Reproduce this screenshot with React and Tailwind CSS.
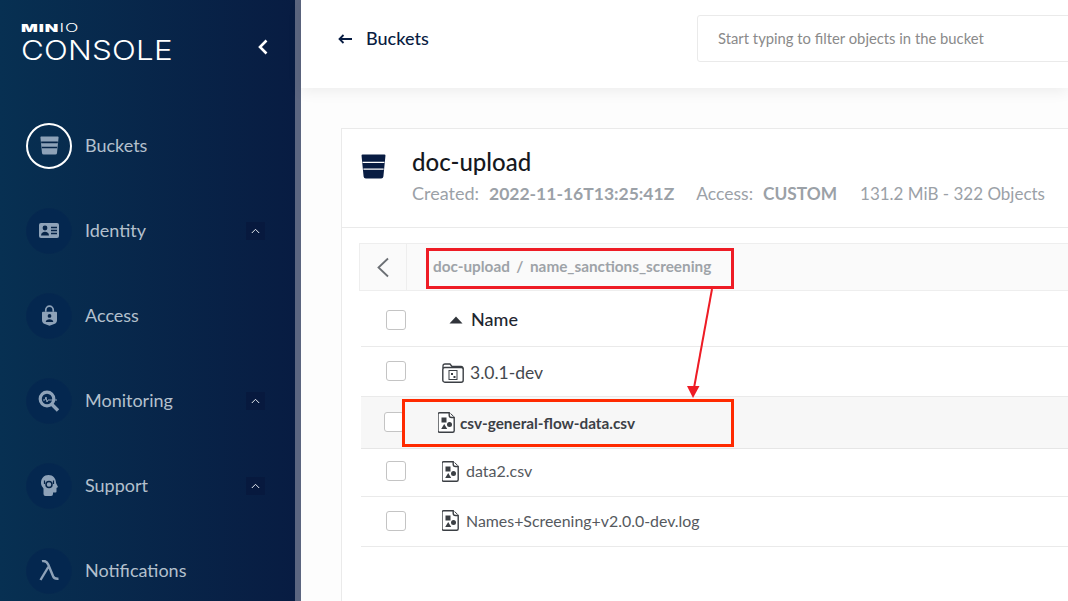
import React from "react";

const Chevron = () => (
  <span className="ml-auto mr-[30px] flex h-[18px] w-[19px] items-center justify-center bg-[#07193e]">
    <svg width="9" height="6" viewBox="0 0 9 6" fill="none" stroke="#e6eaf0" strokeWidth="1"><path d="M.8 5 4.500 1.300 8.200 5" /></svg>
  </span>
);

const BucketGlyph = ({ fill = "#8ea2b8", size = 20, line = "#062448", lw = 2 }) => (
  <svg width={size} height={size} viewBox="0 0 24 24">
    <path d="M.5 1.500Q.5 .5 1.500 .5h21q1 0 1 1L21.500 21.500q-.2 2-2.200 2H4.700q-2 0-2.200-2Z" fill={fill} />
    <path d="M1.500 8h21M2.300 14.500h19.400" stroke={line} strokeWidth={lw} />
  </svg>
);

const IdentityIcon = () => (
  <svg width="20" height="15" viewBox="0 0 20 15"><rect width="20" height="15" rx="2" fill="#8ea2b8" /><circle cx="6" cy="5" r="2.400" fill="#062448" /><path d="M2 12.500c0-5 8-5 8 0Z" fill="#062448" /><path d="M12 4.500h6M12 7.500h6M12 10.500h6" stroke="#062448" strokeWidth="1.300" /></svg>
);
const AccessIcon = () => (
  <svg width="15" height="21" viewBox="0 0 16 22"><path d="M4 7V5a4 4 0 0 1 8 0v2" fill="none" stroke="#8ea2b8" strokeWidth="1.800" /><path d="M1 7h14q1 0 1 1v8q0 3-3 4l-5 2-5-2q-3-1-3-4V8q0-1 1-1Z" fill="#8ea2b8" /><circle cx="8" cy="11.500" r="2" fill="#062448" /><path d="M4 18c0-4 8-4 8 0Z" fill="#062448" /></svg>
);
const MonitorIcon = () => (
  <svg width="22" height="22" viewBox="0 0 22 22"><circle cx="9" cy="9" r="6.800" fill="none" stroke="#8ea2b8" strokeWidth="3.200" /><path d="m13.500 14 6.500 6.500" stroke="#8ea2b8" strokeWidth="3.400" /><path d="M5 10h2l1-3 1 5 1-2h9" fill="none" stroke="#8ea2b8" strokeWidth="1" /></svg>
);
const SupportIcon = () => (
  <svg width="17" height="21" viewBox="0 0 17 21"><path d="M7.500 0C3 0 0 3.500 0 8c0 2.500 1.500 4 2.500 5.500V19q0 2 2 2H10q2 0 2-2v-1.500h2.500q1 0 1-1V13l1.500-1-2-4c0-4.500-3-8-7.500-8Z" fill="#8ea2b8" /><circle cx="8" cy="9.500" r="3" fill="none" stroke="#062448" strokeWidth="1.500" /><path d="M3.500 9V5.500M12.500 9V5.500" stroke="#062448" strokeWidth="1.200" /></svg>
);
const LambdaIcon = () => (
  <svg width="21" height="21" viewBox="0 0 21 21"><path d="M3 1.200c3.500-.8 5 .3 6.200 3.300l5 12c.7 2 2 2.500 5.300 2.200M9.300 7 1.500 20" fill="none" stroke="#8ea2b8" strokeWidth="2.400" /></svg>
);

const NavItem = ({ label, icon, active, chevron }) => (
  <div className="flex h-[85px] items-center pl-[26px]">
    <span className={`flex h-[46px] w-[46px] items-center justify-center rounded-full ${active ? "border-2 border-white" : "border border-[#06284f] bg-[#04274f]"}`}>{icon}</span>
    <span className="ml-[13px] text-[18px] text-[#b4c0cd]">{label}</span>
    {chevron && <Chevron />}
  </div>
);

const FileIcon = () => (
  <svg width="17" height="21" viewBox="0 0 17 21" className="block shrink-0">
    <path d="M1.500 .8h9.700v2.500q0 2.200 2.300 2.200h2.700V18.700q0 1.500-1.500 1.500h-13.200q-1.500 0-1.500-1.500V2.300q0-1.500 1.500-1.500Z" fill="#fff" stroke="#3b3f44" strokeWidth="1.400" />
    <path d="M12.500 1.500 15.700 4.500" stroke="#3b3f44" strokeWidth="1" />
    <rect x="3.500" y="5.500" width="5" height="5" fill="#3b3f44" />
    <circle cx="11.500" cy="12.500" r="2.500" fill="#3b3f44" />
    <path d="m6.200 12 3 5h-6Z" fill="#3b3f44" />
  </svg>
);

const FolderIcon = () => (
  <svg width="22" height="20" viewBox="0 0 22 20" className="block shrink-0">
    <path d="M1 5V3q0-2 2-2h5l2 2.500h9q2 0 2 2V7" fill="none" stroke="#3b3f44" strokeWidth="1.300" />
    <rect x=".8" y="4.500" width="20.400" height="14.700" rx="2" fill="#fff" stroke="#3b3f44" strokeWidth="1.400" />
    <rect x="7" y="7.500" width="8" height="9" fill="none" stroke="#3b3f44" strokeWidth="1" />
    <path d="M9 10h2v2H9ZM11.500 13h2v2h-2Z" fill="#3b3f44" />
  </svg>
);

const Check = ({ className = "" }) => (
  <span className={`block h-5 w-5 shrink-0 rounded-[3px] border border-[#c4c4c4] bg-white ${className}`} />
);

export default function App() {
  return (
    <div className="relative flex h-[601px] w-[1068px] overflow-hidden bg-white font-['Lato',sans-serif]">
      <aside className="w-[295px] shrink-0 bg-[linear-gradient(90deg,#073052_0%,#081c42_100%)]">
        <div className="flex h-[103px] items-start pl-[21px] pt-[23px]">
          <div className="w-[150px] text-white">
            <div className="h-[11px] origin-left scale-x-[1.6] font-['Inter',sans-serif] text-[11px] font-black leading-[11px] tracking-[0.6px]">MIN<span className="font-light">IO</span></div>
            <div className="mt-[3px] origin-left scale-x-[1.16] font-['Inter',sans-serif] text-[27px] font-light leading-[27px] tracking-[0.2px]">CONSOLE</div>
          </div>
          <svg width="12" height="16" viewBox="0 0 12 16" fill="none" stroke="#fff" strokeWidth="2.600" className="ml-[86px] mt-[16px]"><path d="M9.500 1.500 3 8l6.500 6.500" /></svg>
        </div>
        <NavItem label="Buckets" active icon={<BucketGlyph size={19} />} />
        <NavItem label="Identity" chevron icon={<IdentityIcon />} />
        <NavItem label="Access" icon={<AccessIcon />} />
        <NavItem label="Monitoring" chevron icon={<MonitorIcon />} />
        <NavItem label="Support" chevron icon={<SupportIcon />} />
        <NavItem label="Notifications" icon={<LambdaIcon />} />
      </aside>
      <div className="w-[6px] shrink-0 bg-[#5c6680]" />
      <main className="flex min-w-0 flex-1 flex-col bg-[#fdfdfd]">
        <header className="z-10 flex h-[88px] shrink-0 items-center bg-white pb-[11px] pl-[37px] shadow-[0_3px_14px_rgba(0,0,0,0.07)]">
          <svg width="14" height="10" viewBox="0 0 14 10" fill="none" stroke="#081c42" strokeWidth="1.800" className="shrink-0"><path d="M14 5H1.500M5.500 1 1.500 5l4 4" /></svg>
          <span className="ml-[14px] w-[331px] shrink-0 text-[18px] font-medium text-[#081c42]">Buckets</span>
          <div className="flex h-[47px] w-[500px] shrink-0 items-center rounded-[3px] border border-[#eaeaea] bg-white pl-[20px] text-[14.800px] text-[#8a8a8a]">Start typing to filter objects in the bucket</div>
        </header>
        <div className="flex-1 pl-[40px] pt-[40px]">
          <section className="h-[520px] w-[900px] border border-[#eaeaea] bg-white">
            <div className="flex h-[99px] border-b border-[#eaeaea] pl-[19px]">
              <div className="pt-[25px]"><BucketGlyph size={25} fill="#081c42" line="#ffffff" lw={1.300} /></div>
              <div className="ml-[26px] pt-[17px]">
                <h1 className="text-[24px] font-medium leading-[32px] text-[#16181d]">doc-upload</h1>
                <div className="mt-[3px] flex items-baseline text-[18px] leading-[24px] text-[#9ba1a7]">
                  <span>Created:</span>
                  <b className="ml-[10px] text-[17.500px] font-bold">2022-11-16T13:25:41Z</b>
                  <span className="ml-[22px] text-[17.500px]">Access:</span>
                  <b className="ml-[10px] text-[17.300px] font-bold">CUSTOM</b>
                  <span className="ml-[23px] text-[17px]">131.2 MiB - 322 Objects</span>
                </div>
              </div>
            </div>
            <div className="pl-[17px] pt-[15px]">
              <div className="flex h-[48px] items-center border border-[#eeeeee] bg-[#fafafa]">
                <div className="flex h-full w-[47px] shrink-0 items-center justify-center border-r border-[#eeeeee]">
                  <svg width="14" height="21" viewBox="0 0 14 21" fill="none" stroke="#6b6f74" strokeWidth="1.800"><path d="M12 1.500 2.500 10.500l9.500 9" /></svg>
                </div>
                <div className="ml-[26px] -mt-[2px] text-[15.300px] font-bold text-[#9ea3a8]">doc-upload<span className="mx-[6.500px]">/</span>name_sanctions_screening</div>
              </div>
              <div className="ml-[2px] flex h-[56px] items-center border-b border-[#eaeaea] pl-[25px] pt-[2px]">
                <Check />
                <svg width="14" height="8" viewBox="0 0 14 8" className="ml-[43px]"><path d="M7 .5 13.500 7.500H.5Z" fill="#30343a" /></svg>
                <span className="ml-[8px] text-[18px] font-medium text-[#1e2630]">Name</span>
              </div>
              <div className="ml-[2px] flex h-[50px] items-center border-b border-[#eaeaea] pl-[25px]">
                <Check className="-mt-[2px]" />
                <span className="ml-[36px] mt-[2px]"><FolderIcon /></span>
                <span className="ml-[6px] mt-[3px] text-[17.500px] text-[#44484d]">3.0.1-dev</span>
              </div>
              <div className="ml-[2px] flex h-[52px] items-center border-b border-[#e6e6e6] bg-[#f7f7f7] pl-[23px]">
                <Check className="-mt-[2px]" />
                <span className="ml-[34px]"><FileIcon /></span>
                <span className="ml-[5px] mt-[2px] text-[15.300px] font-bold text-[#3c4046]">csv-general-flow-data.csv</span>
              </div>
              <div className="ml-[2px] flex h-[48px] items-center border-b border-[#eaeaea] pb-[3px] pl-[25px]">
                <Check />
                <span className="ml-[36px]"><FileIcon /></span>
                <span className="ml-[7px] text-[16px] text-[#55595e]">data2.csv</span>
              </div>
              <div className="ml-[2px] flex h-[50px] items-center border-b border-[#eaeaea] pb-[2px] pl-[25px]">
                <Check />
                <span className="ml-[36px]"><FileIcon /></span>
                <span className="ml-[7px] text-[15.900px] text-[#55595e]">Names+Screening+v2.0.0-dev.log</span>
              </div>
            </div>
          </section>
        </div>
      </main>
      <div className="absolute left-[426px] top-[248px] h-[41px] w-[308px] border-[3px] border-[#ee1c25]" />
      <div className="absolute left-[402px] top-[399px] h-[48px] w-[332px] border-[3px] border-[#ff2a00]" />
      <svg className="absolute left-[680px] top-[288px]" width="40" height="112" viewBox="0 0 40 112">
        <path d="M32 1 14 100" stroke="#ee1c25" strokeWidth="2" fill="none" />
        <path d="M7 98h12.500L13 110Z" fill="#ee1c25" />
      </svg>
    </div>
  );
}
